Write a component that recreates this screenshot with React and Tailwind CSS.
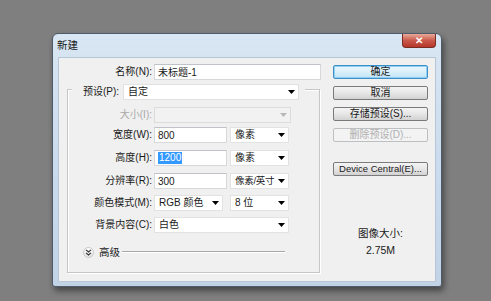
import React from "react";

const Arrow = ({ color = "#000" }) => (
  <svg width="7" height="4" viewBox="0 0 7 4" className="shrink-0">
    <path d="M0 0 H7 L3.5 4 Z" fill={color} />
  </svg>
);

const Input = ({ w, children }) => (
  <div
    className={`${w} h-[16px] bg-white border border-[#d6d8dc] border-t-[#bfc3c9] flex items-center pl-[3px] text-[10px] text-[#1a1a1a] whitespace-nowrap`}
  >
    {children}
  </div>
);

const Select = ({ w, children, disabled, tight }) => (
  <div
    className={`${w} h-[16px] border flex items-center justify-between pl-[4px] pr-[3px] text-[10px] ${
      disabled ? "bg-[#f2f2f2] border-[#dcdcdc] text-[#999]" : "bg-white border-[#e2e2e2] text-[#1a1a1a]"
    }`}
  >
    <span className={`leading-none whitespace-nowrap ${tight ? "text-[9.5px] tracking-[-0.3px]" : ""}`}>{children}</span>
    <Arrow color={disabled ? "#b8b8b8" : "#000"} />
  </div>
);

const Row = ({ label, mt, disabled, children }) => (
  <div className={`flex items-center h-[16px] ${mt}`}>
    <div className={`w-[84px] text-right text-[10px] leading-none whitespace-nowrap ${disabled ? "text-[#a8a8a8]" : "text-[#1a1a1a]"}`}>
      {label}
    </div>
    <div className="ml-[2px] flex items-center gap-[3px]">{children}</div>
  </div>
);

const Button = ({ children, mt, variant }) => {
  const base =
    "w-[95px] h-[14px] rounded-[2px] flex items-center justify-center text-[10px] leading-none whitespace-nowrap";
  let style =
    "border border-[#7a7a7a] bg-gradient-to-b from-[#f4f4f4] via-[#e6e6e6] to-[#d2d2d2] text-[#1a1a1a]";
  if (variant === "default")
    style =
      "border border-[#3c8fc9] bg-gradient-to-b from-[#ecf7fd] via-[#d9effb] to-[#c0e3f6] text-[#1a1a1a] shadow-[inset_0_0_0_1px_#8fd0f3]";
  if (variant === "disabled")
    style = "border border-[#bcc0c3] bg-[#f3f3f3] text-[#b0b0b0]";
  return <div className={`${base} ${style} ${mt}`}>{children}</div>;
};

export default function App() {
  return (
    <div className="w-[491px] h-[301px] bg-[#7f7f7f] pt-[33px] pl-[52px] overflow-hidden font-['Liberation_Sans','Noto_Sans_CJK_SC',sans-serif]">
      <div className="w-[390px] h-[254px] rounded-t-[6px] rounded-b-[3px] border border-[#4f5b68] bg-gradient-to-b from-[#d9e6f3] via-[#cbdcee] to-[#c2d3e6] shadow-[2px_4px_6px_rgba(0,0,0,0.45)] flex flex-col">
        {/* title bar */}
        <div className="h-[23px] flex justify-between pl-[4px] pr-[5px]">
          <div className="text-[10.5px] text-[#1a1a1a] leading-none pt-[6px]">新建</div>
          <div className="w-[34px] h-[14px] rounded-b-[4px] border border-t-0 border-[#7a2c22] bg-gradient-to-b from-[#e9a99b] via-[#c9584a] to-[#b5372a] flex items-center justify-center">
            <span className="text-white text-[10px] font-bold leading-none">✕</span>
          </div>
        </div>
        {/* client area */}
        <div className="mx-[5px] mb-[4px] flex-1 border border-[#b7c6d6] bg-[#f0f0f0] flex">
          {/* left column */}
          <div className="w-[262px] flex flex-col">
            <div className="flex items-center h-[16px] mt-[6px]">
              <div className="w-[93px] text-right text-[10px] leading-none text-[#1a1a1a]">名称(N):</div>
              <div className="ml-[2px]">
                <Input w="w-[167px]">未标题-1</Input>
              </div>
            </div>
            {/* group box */}
            <div className="ml-[8px] mt-[9px] w-[253px] h-[184px] border border-[#c6c6c6] shadow-[inset_1px_1px_0_#ffffff,1px_1px_0_#ffffff] flex flex-col">
              <div className="-mt-[6px] ml-[4px] w-fit flex items-center bg-[#f0f0f0] pl-[11px] pr-[6px] h-[16px]">
                <span className="text-[10px] leading-none text-[#1a1a1a] whitespace-nowrap">预设(P):</span>
                <div className="ml-[4px]">
                  <Select w="w-[176px]">自定</Select>
                </div>
              </div>
              <Row label="大小(I):" mt="mt-[7px]" disabled>
                <Select w="w-[137px]" disabled>{""}</Select>
              </Row>
              <Row label="宽度(W):" mt="mt-[4px]">
                <Input w="w-[73px]">800</Input>
                <Select w="w-[59px]">像素</Select>
              </Row>
              <Row label="高度(H):" mt="mt-[7px]">
                <Input w="w-[73px]">
                  <span className="bg-[#3399ff] text-white leading-[12px] px-[1px]">1200</span>
                </Input>
                <Select w="w-[59px]">像素</Select>
              </Row>
              <Row label="分辨率(R):" mt="mt-[7px]">
                <Input w="w-[73px]">300</Input>
                <Select w="w-[59px]" tight>像素/英寸</Select>
              </Row>
              <Row label="颜色模式(M):" mt="mt-[6px]">
                <Select w="w-[69px]">RGB 颜色</Select>
                <div className="ml-[4px]">
                  <Select w="w-[59px]">8 位</Select>
                </div>
              </Row>
              <Row label="背景内容(C):" mt="mt-[6px]">
                <Select w="w-[135px]">白色</Select>
              </Row>
              <div className="flex items-center h-[12px] mt-[13px] ml-[15px]">
                <div className="w-[11px] h-[11px] rounded-full border border-[#c8c8c8] bg-gradient-to-b from-[#ffffff] to-[#e4e4e4] flex items-center justify-center">
                  <svg width="7" height="7" viewBox="0 0 7 7">
                    <path d="M1 0.8 L3.5 3 L6 0.8 M1 3.8 L3.5 6 L6 3.8" stroke="#333" strokeWidth="1.1" fill="none" />
                  </svg>
                </div>
                <span className="ml-[5px] text-[10.5px] leading-none text-[#1a1a1a]">高级</span>
                <div className="ml-[2px] w-[163px] h-[2px] border-t border-[#a8a8a8] border-b border-b-[#ffffff]"></div>
              </div>
            </div>
          </div>
          {/* right column */}
          <div className="ml-[12px] w-[95px] flex flex-col items-center">
            <Button mt="mt-[7px]" variant="default">确定</Button>
            <Button mt="mt-[7px]">取消</Button>
            <Button mt="mt-[7px]">存储预设(S)...</Button>
            <Button mt="mt-[7px]" variant="disabled">删除预设(D)...</Button>
            <Button mt="mt-[20px]">
              <span className="text-[9.5px]">Device Central(E)...</span>
            </Button>
            <div className="mt-[50px] text-[10.5px] leading-[14px] text-[#1a1a1a]">图像大小:</div>
            <div className="mt-[3px] text-[10.5px] leading-[14px] text-[#1a1a1a]">2.75M</div>
          </div>
        </div>
      </div>
    </div>
  );
}
